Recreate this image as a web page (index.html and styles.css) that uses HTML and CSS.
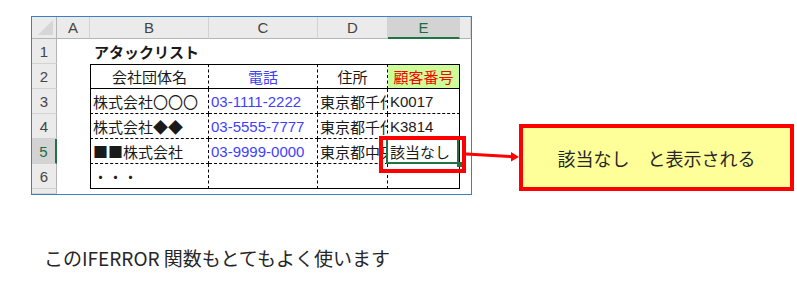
FILE: index.html
```html
<!DOCTYPE html>
<html lang="ja">
<head>
    <meta charset="UTF-8">
    <meta name="viewport" content="width=device-width, initial-scale=1.0">
    <title>IFERROR の使い方</title>
    <link rel="stylesheet" href="styles.css">
</head>
<body>

<div class="page">
    <div class="top">
        <div class="sheet">
            <!-- 列見出し -->
            <div class="hd corner"></div>
            <div class="hd col">A</div>
            <div class="hd col">B</div>
            <div class="hd col">C</div>
            <div class="hd col">D</div>
            <div class="hd col sel">E</div>
            <div class="hd col"></div>

            <!-- 1行目 -->
            <div class="hd row">1</div>
            <div class="c"></div>
            <div class="c title">アタックリスト</div>
            <div class="c"></div>
            <div class="c"></div>
            <div class="c"></div>
            <div class="c"></div>

            <!-- 2行目：表の見出し -->
            <div class="hd row">2</div>
            <div class="c"></div>
            <div class="c t head first">会社団体名</div>
            <div class="c t head tel">電話</div>
            <div class="c t head">住所</div>
            <div class="c t head last id">顧客番号</div>
            <div class="c"></div>

            <div class="hd row">3</div>
            <div class="c"></div>
            <div class="c t first">株式会社〇〇〇</div>
            <div class="c t tel num">03-1111-2222</div>
            <div class="c t">東京都千代田区</div>
            <div class="c t last num">K0017</div>
            <div class="c"></div>

            <div class="hd row">4</div>
            <div class="c"></div>
            <div class="c t first">株式会社◆◆</div>
            <div class="c t tel num">03-5555-7777</div>
            <div class="c t">東京都千代田区</div>
            <div class="c t last num">K3814</div>
            <div class="c"></div>

            <div class="hd row sel">5</div>
            <div class="c"></div>
            <div class="c t first">■■株式会社</div>
            <div class="c t tel num">03-9999-0000</div>
            <div class="c t">東京都中央区</div>
            <div class="c t last pick">該当なし</div>
            <div class="c"></div>

            <div class="hd row">6</div>
            <div class="c"></div>
            <div class="c t first end">・・・</div>
            <div class="c t end"></div>
            <div class="c t end"></div>
            <div class="c t last end"></div>
            <div class="c"></div>

            <!-- 7行目（見切れ） -->
            <div class="hd row"></div>
            <div class="c"></div>
            <div class="c"></div>
            <div class="c"></div>
            <div class="c"></div>
            <div class="c"></div>
            <div class="c"></div>
        </div>

        <div class="callout">該当なし　と表示される</div>

        <!-- 注目セルの赤枠と矢印 -->
        <div class="mark"></div>
        <svg class="arrow" width="56" height="18" viewBox="0 0 56 18">
            <line x1="0" y1="6" x2="47" y2="8.7" stroke="#ff0000" stroke-width="3"/>
            <polygon points="45,4 53,9 45,13.5" fill="#ff0000"/>
        </svg>
    </div>

    <p class="note">このIFERROR 関数もとてもよく使います</p>
</div>

</body>
</html>
```

FILE: styles.css
```css
body {
    margin: 0;
    background-color: #FFFFFF;
    font-family: "Liberation Sans", "Noto Sans CJK JP", sans-serif;
}

.page {
    padding: 16px 0 0 31px;
}

.top {
    position: relative;
    display: flex;
    align-items: flex-start;
}

/* ワークシート */
.sheet {
    display: grid;
    grid-template-columns: 25px 33px 119px 109px 70px 72px 11px;
    grid-template-rows: 22px repeat(6, 25px) 5px;
    border: 1px solid #3d7fc4;
    background-color: #FFFFFF;
    font-size: 15px;
}

.hd {
    box-sizing: border-box;
    display: flex;
    align-items: center;
    justify-content: center;
    background-color: #EBEBEB;
    color: #444444;
}

.col {
    border-right: 1px solid #D2D2D2;
    border-bottom: 1px solid #B4B4B4;
}

.row {
    border-right: 1px solid #B4B4B4;
    border-bottom: 1px solid #D2D2D2;
}

.hd.sel {
    background-color: #D3D3D3;
    color: #1E6B41;
}

.col.sel {
    border-bottom: 2px solid #217346;
}

.row.sel {
    border-right: 2px solid #217346;
}

.corner {
    position: relative;
    border-right: 1px solid #B4B4B4;
    border-bottom: 1px solid #B4B4B4;
}

.corner::after {
    content: "";
    position: absolute;
    right: 3px;
    bottom: 3px;
    width: 15px;
    height: 15px;
    background-color: #D6D6D6;
    clip-path: polygon(100% 0, 100% 100%, 0 100%);
}

.c {
    box-sizing: border-box;
    display: flex;
    align-items: center;
    padding: 0 2px;
    white-space: nowrap;
    overflow: hidden;
    font-family: "Noto Sans CJK JP", sans-serif;
    color: #1A1A1A;
}

.num {
    font-family: "Liberation Sans", "Noto Sans CJK JP", sans-serif;
}

.title {
    padding-left: 4px;
    font-weight: bold;
}

/* 罫線 */
.t {
    border-right: 1px dashed #000000;
    border-bottom: 1px dashed #000000;
}

.t.first {
    border-left: 1px solid #000000;
}

.t.last {
    border-right: 1px solid #000000;
}

.t.head {
    justify-content: center;
    border-top: 1px solid #000000;
    border-bottom: 1px solid #000000;
}

.t.end {
    border-bottom: 1px solid #000000;
}

.tel {
    color: #3F3FFF;
}

.id {
    background-color: #CCFF99;
    color: #FF0000;
}

/* 選択中のセル */
.pick {
    position: relative;
    overflow: visible;
    z-index: 1;
}

.pick::before {
    content: "";
    position: absolute;
    top: -1px;
    left: -2px;
    right: 0;
    bottom: -1px;
    border: 2px solid #217346;
}

.pick::after {
    content: "";
    position: absolute;
    right: -3px;
    bottom: -4px;
    width: 5px;
    height: 5px;
    background-color: #217346;
}

.mark {
    position: absolute;
    left: 348px;
    top: 120px;
    width: 87px;
    height: 37px;
    box-sizing: border-box;
    border: 4px solid #FF0000;
    z-index: 2;
}

.arrow {
    position: absolute;
    left: 435px;
    top: 132px;
}

.callout {
    box-sizing: border-box;
    display: flex;
    align-items: center;
    justify-content: center;
    width: 275px;
    height: 67px;
    margin: 108px 0 0 47px;
    border: 4px solid #FF0000;
    background-color: #FFFF99;
    font-family: "Noto Sans CJK JP", sans-serif;
    font-size: 18px;
    color: #262626;
}

.note {
    margin: 51px 0 0 13px;
    font-family: "Noto Sans CJK JP", sans-serif;
    font-size: 19px;
    line-height: 24px;
    color: #262626;
}
```
